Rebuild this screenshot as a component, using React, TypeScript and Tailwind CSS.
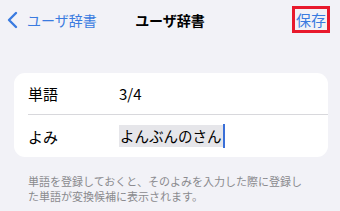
import React from "react";

const jp = { fontFamily: '"Noto Sans CJK JP", "Noto Sans", sans-serif' };

export default function App() {
  return (
    <div className="w-[340px] h-[211px] bg-[#f2f2f7] overflow-hidden" style={jp}>
      {/* Nav bar */}
      <div className="relative h-[40px] flex items-center">
        <div className="flex items-center pl-[7px] text-[#3a7be0]">
          <svg width="11" height="18" viewBox="0 0 11 18" fill="none">
            <path d="M9 2 L2 9 L9 16" stroke="#3a7be0" strokeWidth="2.4" strokeLinecap="round" strokeLinejoin="round" />
          </svg>
          <span className="ml-[9px] text-[14px] leading-none">ユーザ辞書</span>
        </div>
        <div className="absolute left-0 right-0 top-0 h-[40px] flex items-center justify-center pointer-events-none">
          <span className="text-[14px] font-bold leading-none text-black">ユーザ辞書</span>
        </div>
        <div className="ml-auto mr-[10px] mt-[-1px] border-[3px] border-[#e8192c] px-[1px] h-[27px] flex items-center">
          <span className="text-[15px] leading-none text-[#3a7be0]">保存</span>
        </div>
      </div>

      {/* Card */}
      <div className="mt-[33px] mx-[14px] w-[314px] bg-white rounded-[11px]">
        <div className="flex items-center h-[41px] pl-[14px]">
          <span className="w-[91px] text-[15px] leading-none text-black">単語</span>
          <span className="text-[15px] leading-none text-black">3/4</span>
        </div>
        <div className="ml-[14px] h-px bg-[#d8d8dc]" />
        <div className="flex items-center h-[42px] pl-[14px]">
          <span className="w-[91px] text-[15px] leading-none text-black">よみ</span>
          <span className="flex items-center">
            <span className="bg-[#e6e6ea] text-[14.5px] leading-[22px] text-black px-[1px]">よんぶんのさん</span>
            <span className="w-[2px] h-[24px] bg-[#3a6fd8]" />
          </span>
        </div>
      </div>

      {/* Footer */}
      <p className="mt-[17px] mx-[28px] text-[11px] leading-[15px] text-[#8a8a8e]">
        単語を登録しておくと、そのよみを入力した際に登録した単語が変換候補に表示されます。
      </p>
    </div>
  );
}
